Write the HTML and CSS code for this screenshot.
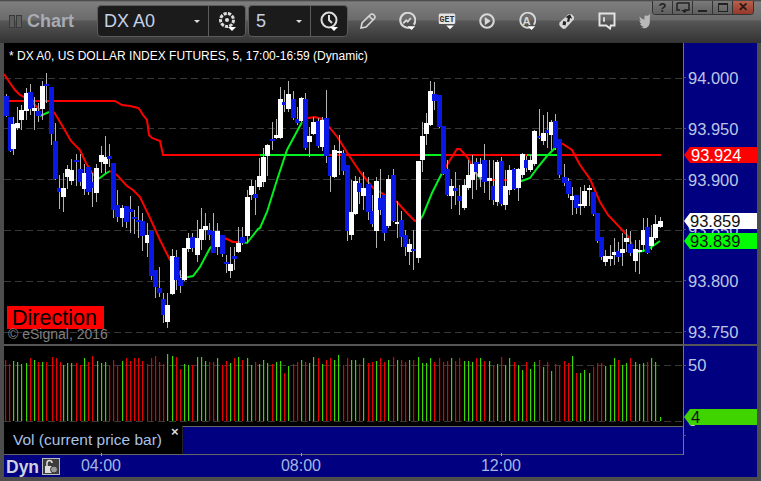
FILE: index.html
```html
<!DOCTYPE html>
<html lang="en">
<head>
<meta charset="utf-8">
<title>Chart</title>
<link rel="stylesheet" href="styles.css">
</head>
<body>
<div class="window">
  <header class="toolbar">
    <div class="brand"><span class="grip"></span><span class="grip"></span><span class="brand-name">Chart</span></div>
    <div class="combo symbol-combo">
      <div class="combo-field"><span>DX A0</span><i class="caret"></i></div>
      <div class="combo-btn">
        <svg class="icon" width="22" height="22" viewBox="0 0 22 22"><circle cx="11" cy="10" r="6.5" fill="none" stroke="#ddd" stroke-width="3" stroke-dasharray="3.2 1.2"/><circle cx="11" cy="10" r="2" fill="#ddd"/><path d="M12 17h8l-4 4z" fill="#fff"/></svg>
      </div>
    </div>
    <div class="combo interval-combo">
      <div class="combo-field"><span>5</span><i class="caret"></i></div>
      <div class="combo-btn">
        <svg class="icon" width="22" height="22" viewBox="0 0 22 22"><circle cx="11" cy="10" r="7.5" fill="none" stroke="#ddd" stroke-width="2"/><path d="M11 5v5l3 3" fill="none" stroke="#ddd" stroke-width="2"/><path d="M12 17h8l-4 4z" fill="#fff"/></svg>
      </div>
    </div>
    <div class="tools">
      <svg class="tool tool-pencil" width="18" height="18" viewBox="0 0 18 18"><path d="M2 16l1-5 8-8q2-2 4 0t0 4l-8 8zM10 4l4 4" fill="none" stroke="#d8d8d8" stroke-width="1.6"/></svg>
      <svg class="tool" width="18" height="18" viewBox="0 0 24 24"><path d="M21 17a10 10 0 1 0-5 3.500" fill="none" stroke="#d8d8d8" stroke-width="2.800"/><path d="M7 15l4-4 2 2 4-5" fill="none" stroke="#d8d8d8" stroke-width="2.400"/><path d="M13 19h10l-5 5z" fill="#fff"/></svg>
      <svg class="tool" width="18" height="18" viewBox="0 0 24 24"><rect x="1" y="2" width="22" height="14" rx="2" fill="#e4e4e4"/><text x="12" y="13" class="get-text">GET</text><path d="M11 18h10l-5 5z" fill="#fff"/></svg>
      <svg class="tool" width="18" height="18" viewBox="0 0 24 24"><circle cx="12" cy="12" r="9" fill="none" stroke="#d8d8d8" stroke-width="2.800"/><path d="M9 6.500l8 5.500-8 5.500z" fill="#d8d8d8"/></svg>
      <svg class="tool" width="18" height="18" viewBox="0 0 24 24"><path d="M21 17a10 10 0 1 0-5 3.500" fill="none" stroke="#d8d8d8" stroke-width="2.400"/><text x="11.500" y="17" class="a-text">A</text><path d="M13 19h10l-5 5z" fill="#fff"/></svg>
      <svg class="tool" width="18" height="18" viewBox="0 0 24 24"><path d="M2 14L14 3q2-1 4 0l3 3q1 2 0 4L10 22q-2 1-4 0l-3-3q-2-2-1-5z" fill="#d8d8d8"/><path d="M7 12l4 1-1 5-4-1zM12 13l1-5-3-1 6-4 3 6-3-1-1 5z" fill="#222"/></svg>
      <svg class="tool" width="18" height="18" viewBox="0 0 24 24"><path d="M2 2h20v16h-5l-1 4-5-4H2z" fill="none" stroke="#e4e4e4" stroke-width="2.600"/><path d="M8 7v6" stroke="#e4e4e4" stroke-width="2.400"/></svg>
      <svg class="tool tool-bird" width="18" height="18" viewBox="0 0 24 24"><path d="M21 2q-1 3-3 3-2-1-4 0 0 3 0 5-3 0-7-4 1 4 2 6l-2-1q1 4 3 5l-2 0q2 3 5 4-2 1-4 1 8 2 11-3 2-5 1-9 1-3 0-7z" fill="#b9b9b9"/></svg>
    </div>
    <div class="win-controls">
      <button class="win-btn">?</button>
      <button class="win-btn"><svg width="16" height="12" viewBox="0 0 16 12"><path d="M2 1h12v7H9" fill="none" stroke="#222" stroke-width="1.5"/><path d="M2 1v7h3" fill="none" stroke="#222" stroke-width="1.5"/><path d="M6 8h7l-3.500 3z" fill="#222"/></svg></button>
      <button class="win-btn"><span class="min-bar"></span></button>
      <button class="win-btn"><span class="max-box"></span></button>
      <button class="win-btn win-close">&#10005;</button>
    </div>
  </header>

  <main class="workspace">
    <div class="panes">
      <section class="price-pane">
        <svg id="price-chart" class="chart" width="679" height="301" viewBox="4 43 679 301"></svg>
        <div class="chart-title">* DX A0, US DOLLAR INDEX FUTURES, 5, 17:00-16:59 (Dynamic)</div>
        <div class="direction">Direction</div>
        <div class="copyright">© eSignal, 2016</div>
      </section>
      <section class="volume-pane">
        <svg id="volume-chart" class="chart" width="679" height="80" viewBox="4 346 679 80"></svg>
      </section>
      <section class="study-row">
        <div class="study-label">Vol (current price bar)<span class="study-close">×</span></div>
        <div class="study-fill"></div>
      </section>
      <footer class="time-axis">
        <span class="dyn">Dyn</span>
        <span class="lock"><svg width="16" height="15" viewBox="0 0 16 15"><path d="M4 8V4q0-2.500 2.500-2.500T9 4" fill="none" stroke="#ddd" stroke-width="1.5"/><rect x="2" y="7" width="8" height="7" fill="#ddd"/><circle cx="11" cy="10.500" r="3.500" fill="#999" stroke="#333"/></svg></span>
        <span class="time time-a">04:00</span>
        <span class="time">08:00</span>
        <span class="time">12:00</span>
      </footer>
    </div>
    <aside class="axis">
      <div class="price-axis">
        <span class="tick">94.000</span>
        <span class="tick">93.950</span>
        <span class="tick">93.900</span>
        <span class="tick">93.850</span>
        <span class="tick">93.800</span>
        <span class="tick">93.750</span>
        <span class="tag tag-red">93.924</span>
        <span class="tag tag-white">93.859</span>
        <span class="tag tag-green">93.839</span>
      </div>
      <div class="volume-axis">
        <span class="tick vol-tick">50</span>
        <span class="tick vol-zero">0</span>
        <span class="tag tag-vol">4</span>
      </div>
      <div class="study-axis"></div>
    </aside>
  </main>
</div>
<script src="chart.js"></script>
</body>
</html>
```
FILE: styles.css
```css
* { box-sizing: border-box; }
html, body { margin: 0; padding: 0; background: #4a4a4a; }
body { width: 761px; height: 481px; overflow: hidden; font-family: "Liberation Sans", Arial, sans-serif; }
.window { width: 761px; height: 481px; background: #4d4d4d; padding-bottom: 4px; display: flex; flex-direction: column; }

.toolbar { height: 43px; flex: none; display: flex; align-items: flex-start; position: relative; padding-left: 9px;
  background: linear-gradient(#3c3c3c 0, #7e7e7e 2px, #6b6b6b 20px, #565656 21px, #333 43px); }
.brand { display: flex; align-items: center; gap: 1px; height: 14px; margin-top: 14px; width: 88px; }
.grip { width: 6px; height: 13px; border: 1px solid #3a3a3a; background: #5e5e5e; }
.brand-name { font-weight: bold; font-size: 18px; color: #a8acb4; margin-left: 4px; }
.combo { display: flex; height: 32px; margin-top: 5px; background: #1b1b1b; border: 1px solid #5c5c5c; border-radius: 4px; }
.symbol-combo { width: 149px; margin-right: 2px; }
.interval-combo { width: 100px; }
.combo-field { flex: 1; display: flex; align-items: center; justify-content: space-between; padding: 0 8px 0 6px;
  color: #c4d2ea; font-size: 18px; border-right: 1px solid #5c5c5c; }
.interval-combo .combo-field span { margin-left: 1px; }
.caret { width: 0; height: 0; border: 3px solid transparent; border-top: 3px solid #ddd; border-bottom: 0; }
.combo-btn { width: 36px; display: flex; align-items: center; justify-content: center; }
.tools { display: flex; align-items: center; height: 24px; margin-left: 11px; margin-top: 9px; gap: 22px; }
.tool { flex: none; }
.tool-pencil { margin-right: -1px; }
.tool-bird { margin-left: -4px; }
.get-text { font: bold 11px "Liberation Mono", monospace; fill: #333; text-anchor: middle; }
.a-text { font: bold 15px "Liberation Sans", sans-serif; fill: #d8d8d8; text-anchor: middle; }

.win-controls { position: absolute; top: 1px; left: 652px; display: flex; height: 14px; border: 1px solid #333; border-top: 0; border-radius: 0 0 4px 4px; overflow: hidden; background: #6d6d6d; }
.win-btn { width: 20px; height: 13px; padding: 0; border: 0; border-right: 1px solid #333; background: linear-gradient(#7a7a7a, #5f5f5f); color: #222; font: bold 13px/13px "Liberation Sans", sans-serif; display: flex; align-items: center; justify-content: center; }
.win-close { border-right: 0; background: linear-gradient(#b8604c, #96382a); color: #2a1510; font-size: 12px; }
.min-bar { width: 9px; height: 2px; background: #222; margin-top: 6px; }
.max-box { width: 10px; height: 9px; border: 1px solid #222; border-top-width: 2px; }

.workspace { flex: 1; display: flex; margin: 0 4px; min-height: 0; }
.panes { width: 679px; display: flex; flex-direction: column; }
.chart { display: block; }

.price-pane { height: 303px; background: #000; position: relative; border-bottom: 2px solid #555; }
.chart-title { position: absolute; left: 5px; top: 6px; font-size: 12px; line-height: 14px; color: #fff; white-space: nowrap; }
.direction { position: absolute; left: 3px; top: 263px; width: 97px; height: 23px; background: #ff0000; color: #000; font-size: 21.500px; line-height: 24px; padding-left: 5px; }
.copyright { position: absolute; left: 4px; top: 284px; font-size: 14px; line-height: 15px; color: #808080; white-space: nowrap; }

.volume-pane { height: 80px; background: #000; }
.study-row { height: 29px; display: flex; background: #000; border-bottom: 1px solid #666; }
.study-label { width: 178px; position: relative; color: #a9c2e6; font-size: 15.500px; line-height: 28px; padding-left: 9px; white-space: nowrap; }
.study-close { position: absolute; left: 167px; top: -8px; color: #ddd; font-size: 13px; font-weight: bold; }
.study-fill { flex: 1; background: #000080; border-top: 1px solid #666; border-left: 1px solid #222; }

.time-axis { flex: 1; background: #000080; display: flex; align-items: center; position: relative; color: #a3b6e2; }
.dyn { position: absolute; left: 2px; top: 2px; font-weight: bold; font-size: 17.500px; line-height: 20px; color: #cfd2dc; }
.lock { position: absolute; left: 38px; top: 3px; width: 18px; height: 17px; background: #3c3c3c; border: 1px solid #bbb; display: flex; align-items: center; justify-content: center; }
.time { font-size: 16px; width: 200px; text-align: center; position: relative; }
.time-a { margin-left: -3px; }
.time::before { content: ""; position: absolute; left: 50%; top: -4px; width: 1px; height: 3px; background: #999; }

.axis { width: 74px; display: flex; flex-direction: column; background: #000080; }
.price-axis { height: 303px; position: relative; border-left: 1px solid #777; border-bottom: 2px solid #555; padding-top: 9px; display: flex; flex-direction: column; }
.tick { display: block; height: 50.800px; flex: none; line-height: 52px; font-size: 16.500px; color: #bcc6e4; padding-left: 4px; position: relative; }
.tick::before { content: ""; position: absolute; left: -1px; top: 25px; width: 3px; height: 1px; background: #555; }
.volume-axis { height: 80px; position: relative; border-left: 1px solid #777; }
.vol-tick { height: 20px; margin-top: 9px; line-height: 20px; }
.vol-tick::before { top: 10px; }
.vol-zero { position: absolute; top: 64px; height: 20px; line-height: 20px; }
.study-axis { height: 29px; border-left: 1px solid #777; border-bottom: 1px solid #666; width: 1px; }
.tag { position: absolute; left: 6px; right: 0; height: 16px; font-size: 16.500px; line-height: 17px; white-space: nowrap; }
.tag::before { content: ""; position: absolute; left: -6px; top: 0; border: 8px solid transparent; border-left: 0; border-right-width: 6px; }
.tag-red { top: 104px; background: #ff0000; color: #fff; padding-left: 1px; }
.tag-red::before { border-right-color: #ff0000; }
.tag-white { top: 170px; background: #fff; color: #111; }
.tag-white::before { border-right-color: #fff; }
.tag-green { top: 190px; background: #00ff00; color: #111; }
.tag-green::before { border-right-color: #00ff00; }
.tag-vol { top: 63px; background: #3fd400; color: #111; padding-left: 1px; }
.tag-vol::before { border-right-color: #3fd400; }
```
FILE: chart.js
```javascript
var BLUE = "#0a18e6", WHITE = "#ffffff", WICK = "#b4b4b4", RED = "#ff0000", GREEN = "#00f020";

// x, body top, body bottom, wick top, wick bottom, colour (w/b)
var candles = [
[6,96,116,94,117,"b"],[10,117,151,117,152,"b"],[13,124,149,117,155,"w"],[17,123,128,107,130,"w"],
[21,110,120,105,130,"w"],[26,93,111,88,120,"w"],[30,92,109,84,115,"b"],[34,108,111,97,130,"w"],
[38,111,116,103,122,"b"],[42,86,109,81,120,"w"],[46,84,86,73,103,"b"],[51,87,134,87,145,"b"],
[55,141,179,123,180,"b"],[59,188,192,175,209,"b"],[63,188,197,173,212,"w"],[67,169,177,165,189,"w"],
[71,170,181,159,185,"w"],[76,160,162,154,186,"b"],[80,169,182,154,186,"b"],[84,173,189,164,195,"w"],
[88,167,192,167,195,"b"],[92,182,188,173,207,"b"],[96,168,193,164,202,"w"],[101,155,162,146,173,"w"],
[105,157,164,136,173,"w"],[109,156,159,144,167,"b"],[113,163,210,163,218,"b"],[117,205,217,190,222,"b"],
[122,208,218,205,227,"w"],[126,206,222,206,228,"b"],[130,209,212,196,233,"b"],[134,217,219,210,234,"b"],
[138,220,222,206,238,"b"],[142,221,236,213,251,"b"],[147,235,243,223,257,"w"],[151,231,276,231,280,"b"],
[155,270,287,270,298,"b"],[159,288,293,267,297,"b"],[163,299,315,293,323,"b"],[167,305,322,293,328,"w"],
[172,256,294,249,295,"w"],[176,257,280,250,290,"b"],[180,278,286,270,293,"b"],[184,248,280,248,281,"w"],
[188,238,249,233,252,"w"],[192,237,248,233,252,"b"],[197,238,255,220,262,"w"],[201,229,240,208,250,"w"],
[205,226,230,213,240,"w"],[209,230,235,223,240,"b"],[213,231,253,213,253,"b"],[217,231,247,223,255,"w"],
[222,235,254,235,257,"b"],[226,262,263,255,273,"b"],[230,264,271,247,278,"w"],[234,256,259,247,270,"b"],
[238,243,252,227,253,"w"],[242,237,243,227,245,"b"],[247,197,236,190,243,"w"],[251,186,195,180,200,"w"],
[255,194,198,180,215,"b"],[259,176,187,158,190,"w"],[263,157,182,148,187,"w"],[267,145,156,144,176,"w"],
[272,139,141,122,150,"b"],[276,135,138,119,139,"w"],[280,99,138,87,139,"w"],[284,102,105,90,112,"b"],
[288,94,109,81,112,"w"],[293,99,118,91,120,"b"],[297,119,123,107,125,"b"],[301,98,121,97,122,"w"],
[305,99,148,93,150,"b"],[309,136,142,127,157,"w"],[313,122,134,117,135,"w"],[318,121,146,118,148,"b"],
[322,120,147,117,151,"w"],[326,118,156,90,163,"b"],[330,157,176,157,192,"b"],[334,150,177,145,178,"w"],
[339,151,153,135,175,"w"],[343,153,171,150,175,"b"],[347,165,231,165,241,"b"],[351,212,235,180,240,"w"],
[355,181,214,176,215,"w"],[359,183,192,177,204,"b"],[363,188,196,172,210,"w"],[368,184,212,177,220,"b"],
[372,211,224,195,227,"b"],[376,181,231,177,248,"w"],[380,198,210,169,215,"b"],[384,195,233,195,241,"b"],
[388,179,226,175,228,"w"],[393,175,221,169,222,"b"],[397,222,224,201,238,"w"],[401,220,237,211,247,"b"],
[405,235,247,230,256,"b"],[409,244,252,239,265,"w"],[413,249,251,230,270,"b"],[418,161,258,161,263,"w"],
[422,136,160,122,172,"w"],[426,123,134,113,145,"w"],[430,91,125,81,126,"w"],[434,94,101,82,110,"b"],
[439,95,127,95,128,"b"],[443,126,174,126,175,"b"],[447,169,195,160,196,"b"],[451,186,196,179,209,"w"],
[455,188,191,172,205,"b"],[459,196,201,185,215,"b"],[464,185,208,179,210,"w"],[468,175,188,160,190,"w"],
[472,164,180,155,199,"w"],[476,162,172,158,190,"b"],[480,164,177,158,187,"w"],[484,160,182,144,193,"b"],
[489,178,181,160,200,"w"],[493,186,200,160,205,"b"],[497,162,202,160,206,"w"],[501,161,204,157,206,"b"],
[505,186,205,170,210,"w"],[509,170,190,165,195,"w"],[514,169,189,168,190,"b"],[518,169,188,168,201,"w"],
[522,154,175,153,178,"w"],[526,160,168,156,172,"b"],[530,160,170,155,172,"w"],[534,131,164,130,166,"w"],
[539,136,138,109,139,"b"],[543,133,141,115,145,"w"],[547,130,133,112,148,"b"],[551,122,135,120,150,"w"],
[555,121,148,114,150,"b"],[559,139,175,139,178,"b"],[564,177,183,164,186,"b"],[568,181,194,178,198,"b"],
[572,196,200,187,215,"w"],[576,195,208,195,214,"b"],[580,204,206,187,215,"w"],[584,191,206,185,208,"w"],
[589,188,190,185,206,"w"],[593,192,214,192,216,"b"],[597,213,241,213,243,"b"],[601,237,257,237,260,"b"],
[605,256,262,250,266,"w"],[610,256,259,245,266,"w"],[614,252,255,238,265,"w"],[618,251,257,242,262,"b"],
[622,249,253,233,266,"w"],[626,238,242,229,252,"w"],[630,244,253,231,256,"b"],[635,249,261,240,272,"w"],
[639,250,252,240,274,"w"],[643,230,245,218,252,"w"],[647,227,253,218,254,"b"],[651,237,246,225,250,"w"],
[655,224,238,215,240,"w"],[660,221,227,217,228,"w"]];

// moving-average line: runs of points, each with its colour
var maRuns = [
[RED, [[4,74],[10,83],[15,90],[20,95],[30,100],[40,110]]],
[GREEN, [[40,116],[49,112]]],
[RED, [[54,112],[63,127],[71,141],[80,150],[86,163],[92,173],[96,177]]],
[GREEN, [[96,180],[100,178],[105,174],[110,171]]],
[RED, [[110,171],[117,175],[127,186],[133,190],[140,197],[150,218],[160,240],[170,260],[178,270],[181,276]]],
[GREEN, [[181,278],[188,277],[193,276],[200,267],[210,248],[218,240]]],
[RED, [[218,236],[227,239],[233,242],[242,242]]],
[GREEN, [[242,242],[247,243],[258,229],[260,228],[267,212],[277,180],[287,150],[302,122]]],
[RED, [[302,120],[308,118],[315,117],[322,119],[330,128],[338,138],[350,157],[360,172],[373,188],[397,202],[407,213],[415,221],[420,221]]],
[GREEN, [[420,220],[423,215],[432,193],[442,173]]],
[RED, [[442,173],[447,165],[450,160],[457,149],[460,149],[468,158],[475,172]]],
[GREEN, [[475,172],[480,178],[487,180]]],
[RED, [[487,180],[513,180]]],
[GREEN, [[513,180],[522,181],[530,178],[538,167],[547,156],[555,148]]],
[RED, [[555,144],[563,144],[572,150],[580,165],[590,179],[600,202],[608,215],[627,235],[633,247]]],
[GREEN, [[633,250],[638,252],[647,250],[660,241]]]];

var flatRuns = [
[RED, [[4,101],[115,101],[122,105],[130,106],[138,108],[140,110],[143,115],[147,120],[149,135],[152,138],[160,141],[163,155],[260,155]]],
[GREEN, [[260,155],[329,155]]],
[RED, [[329,155],[425,155]]],
[GREEN, [[425,155],[441,155]]],
[RED, [[441,155],[527,155]]],
[GREEN, [[527,155],[557,155]]],
[RED, [[557,155],[661,155]]]];

// volume bars: x, top y, colour (r/g)
var vol = [
[5,360,"r"],[9,364,"r"],[13,361,"g"],[17,362,"g"],[21,364,"g"],[26,363,"g"],[30,358,"r"],[34,360,"g"],
[38,362,"r"],[42,362,"g"],[46,362,"r"],[52,357,"r"],[56,358,"r"],[60,362,"r"],[63,365,"g"],[67,363,"g"],
[71,363,"g"],[76,363,"r"],[80,365,"r"],[84,358,"g"],[88,362,"r"],[92,356,"r"],[97,361,"g"],[101,363,"g"],
[105,362,"g"],[109,365,"r"],[113,360,"r"],[117,366,"r"],[122,361,"g"],[126,358,"r"],[130,361,"r"],[134,358,"r"],
[138,358,"r"],[142,361,"r"],[147,364,"r"],[151,358,"r"],[155,356,"r"],[159,362,"r"],[163,364,"r"],[167,354,"g"],
[172,356,"g"],[176,357,"r"],[180,369,"r"],[184,364,"g"],[188,365,"g"],[192,365,"r"],[197,357,"g"],[201,357,"g"],
[205,361,"g"],[209,362,"r"],[213,362,"r"],[217,358,"g"],[222,365,"r"],[226,361,"r"],[230,363,"g"],[234,358,"r"],
[238,357,"g"],[242,360,"r"],[247,358,"g"],[251,365,"g"],[255,362,"r"],[259,364,"g"],[263,360,"g"],[267,363,"g"],
[272,364,"r"],[276,362,"g"],[280,361,"g"],[284,373,"r"],[288,366,"g"],[293,364,"r"],[297,362,"r"],[301,360,"g"],
[305,362,"r"],[309,363,"g"],[313,357,"g"],[318,358,"r"],[322,364,"g"],[326,360,"r"],[330,358,"r"],[334,360,"g"],
[338,355,"g"],[343,365,"r"],[347,358,"r"],[351,360,"g"],[355,360,"g"],[359,364,"r"],[363,358,"g"],[368,363,"r"],
[372,362,"r"],[376,361,"g"],[380,358,"r"],[384,362,"r"],[388,360,"g"],[393,357,"r"],[397,360,"g"],[401,360,"r"],
[405,362,"r"],[409,360,"g"],[413,360,"r"],[418,357,"g"],[422,363,"g"],[426,363,"g"],[430,358,"g"],[434,362,"r"],
[439,358,"r"],[443,362,"r"],[447,361,"r"],[451,358,"g"],[455,361,"r"],[459,358,"r"],[464,361,"g"],[468,361,"g"],
[472,362,"g"],[476,358,"r"],[480,358,"g"],[484,361,"r"],[489,361,"g"],[493,366,"r"],[497,364,"g"],[501,357,"r"],
[505,365,"g"],[509,358,"g"],[514,362,"r"],[518,365,"g"],[522,370,"g"],[526,362,"r"],[530,369,"g"],[534,362,"g"],
[539,360,"r"],[543,367,"g"],[547,362,"r"],[551,371,"g"],[555,364,"r"],[559,366,"r"],[564,361,"r"],[568,363,"r"],
[572,356,"g"],[576,373,"r"],[580,373,"g"],[584,370,"g"],[589,373,"g"],[593,367,"r"],[597,363,"r"],[601,363,"r"],
[605,366,"g"],[610,365,"g"],[614,358,"g"],[618,360,"r"],[622,365,"g"],[626,363,"g"],[630,358,"r"],[635,362,"g"],
[639,364,"g"],[643,363,"g"],[647,362,"r"],[651,358,"g"],[655,362,"g"],[660,417,"g"]];

function rect(x, y, w, h, fill) {
  return '<rect x="' + x + '" y="' + y + '" width="' + w + '" height="' + h + '" fill="' + fill + '"/>';
}
function poly(points, colour) {
  return '<polyline points="' + points.join(" ") + '" fill="none" stroke="' + colour + '" stroke-width="2"/>';
}
function dash(y) {
  return '<line x1="4" x2="683" y1="' + y + '" y2="' + y + '" stroke="#383838" stroke-dasharray="7 4"/>';
}

var price = "";
[78.5, 128.5, 179.5, 230.5, 281.5, 332.5].forEach(function (y) { price += dash(y); });
flatRuns.concat(maRuns).forEach(function (run) { price += poly(run[1], run[0]); });
candles.forEach(function (c) {
  var x = Math.round(c[0]);
  price += rect(x, c[3], 1, c[4] - c[3], WICK);
});
candles.forEach(function (c) {
  var x = Math.round(c[0]) - 2;
  price += rect(x, c[1], 5, Math.max(c[2] - c[1], 2), c[5] === "w" ? WHITE : BLUE);
});
document.getElementById("price-chart").innerHTML = price;

var volume = dash(365.5) + dash(421.5);
vol.forEach(function (v) {
  volume += rect(v[0], v[1], 1.2, 421 - v[1], v[2] === "r" ? "#e80000" : "#3ed400");
});
document.getElementById("volume-chart").innerHTML = volume;
```
